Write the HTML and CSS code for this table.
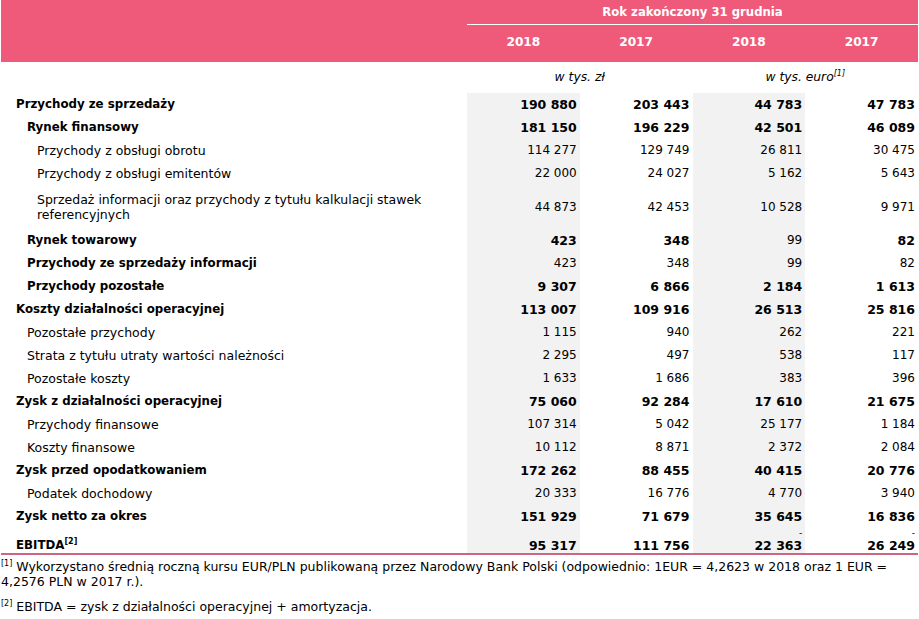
FILE: index.html
```html
<!DOCTYPE html>
<html lang="pl">
<head>
<meta charset="utf-8">
<title>Rachunek zysków i strat</title>
<link rel="stylesheet" href="styles.css">
</head>
<body>
<table class="fin">
  <colgroup>
    <col class="c-label">
    <col class="c-num">
    <col class="c-num">
    <col class="c-num">
    <col class="c-num">
  </colgroup>
  <thead>
    <tr class="h1">
      <th></th>
      <th colspan="4" class="period">Rok zakończony 31 grudnia</th>
    </tr>
    <tr class="h2">
      <th></th>
      <th>2018</th>
      <th>2017</th>
      <th>2018</th>
      <th>2017</th>
    </tr>
  </thead>
  <tbody>
    <tr class="units">
      <td></td>
      <td colspan="2">w tys. zł</td>
      <td colspan="2">w tys. euro<sup>[1]</sup></td>
    </tr>
    <tr class="b l0"><td>Przychody ze sprzedaży</td><td>190 880</td><td>203 443</td><td>44 783</td><td>47 783</td></tr>
    <tr class="b l1"><td>Rynek finansowy</td><td>181 150</td><td>196 229</td><td>42 501</td><td>46 089</td></tr>
    <tr class="l2"><td>Przychody z obsługi obrotu</td><td>114 277</td><td>129 749</td><td>26 811</td><td>30 475</td></tr>
    <tr class="l2"><td>Przychody z obsługi emitentów</td><td>22 000</td><td>24 027</td><td>5 162</td><td>5 643</td></tr>
    <tr class="l2 tall"><td>Sprzedaż informacji oraz przychody z tytułu kalkulacji stawek referencyjnych</td><td>44 873</td><td>42 453</td><td>10 528</td><td>9 971</td></tr>
    <tr class="b l1"><td>Rynek towarowy</td><td>423</td><td>348</td><td class="n">99</td><td>82</td></tr>
    <tr class="b l1"><td>Przychody ze sprzedaży informacji</td><td class="n">423</td><td class="n">348</td><td class="n">99</td><td class="n">82</td></tr>
    <tr class="b l1"><td>Przychody pozostałe</td><td>9 307</td><td>6 866</td><td>2 184</td><td>1 613</td></tr>
    <tr class="b l0"><td>Koszty działalności operacyjnej</td><td>113 007</td><td>109 916</td><td>26 513</td><td>25 816</td></tr>
    <tr class="l1"><td>Pozostałe przychody</td><td>1 115</td><td>940</td><td>262</td><td>221</td></tr>
    <tr class="l1"><td>Strata z tytułu utraty wartości należności</td><td>2 295</td><td>497</td><td>538</td><td>117</td></tr>
    <tr class="l1"><td>Pozostałe koszty</td><td>1 633</td><td>1 686</td><td>383</td><td>396</td></tr>
    <tr class="b l0"><td>Zysk z działalności operacyjnej</td><td>75 060</td><td>92 284</td><td>17 610</td><td>21 675</td></tr>
    <tr class="l1"><td>Przychody finansowe</td><td>107 314</td><td>5 042</td><td>25 177</td><td>1 184</td></tr>
    <tr class="l1"><td>Koszty finansowe</td><td>10 112</td><td>8 871</td><td>2 372</td><td>2 084</td></tr>
    <tr class="b l0"><td>Zysk przed opodatkowaniem</td><td>172 262</td><td>88 455</td><td>40 415</td><td>20 776</td></tr>
    <tr class="l1"><td>Podatek dochodowy</td><td>20 333</td><td>16 776</td><td>4 770</td><td>3 940</td></tr>
    <tr class="b l0"><td>Zysk netto za okres</td><td>151 929</td><td>71 679</td><td>35 645</td><td>16 836</td></tr>
    <tr class="b l0 last"><td>EBITDA<sup>[2]</sup></td><td>95 317</td><td>111 756</td><td><span class="dash">-</span>22 363</td><td><span class="dash">-</span>26 249</td></tr>
  </tbody>
</table>
<div class="notes">
  <p><sup>[1]</sup> Wykorzystano średnią roczną kursu EUR/PLN publikowaną przez Narodowy Bank Polski (odpowiednio: 1EUR = 4,2623 w 2018 oraz 1 EUR = 4,2576 PLN w 2017 r.).</p>
  <p><sup>[2]</sup> EBITDA = zysk z działalności operacyjnej + amortyzacja.</p>
</div>
</body>
</html>
```
FILE: styles.css
```css
html, body {
  margin: 0;
  padding: 0;
  background: #fff;
}
body {
  font-family: "DejaVu Sans", Verdana, sans-serif;
  font-size: 12.5px;
  color: #000;
}
.fin {
  border-collapse: collapse;
  table-layout: fixed;
  width: 917px;
  margin-left: 1px;
}
.c-label { width: 466px; }
.c-num { width: 112.75px; }

/* header band */
.fin thead tr { background: #ef5a7a; color: #fff; }
.fin th {
  font-weight: bold;
  text-align: center;
  padding: 0;
  line-height: 15px;
}
.fin .h1 th { height: 24px; font-size: 11.7px; }
.fin .h1 .period { border-bottom: 1px solid #fff; }
.fin .h2 th { height: 35px; padding-bottom: 2px; font-size: 12.2px; }

/* units row */
.fin tbody tr.units td {
  font-style: italic;
  text-align: center;
  font-size: 12.3px;
  padding: 8px 0 8px 0;
  background: none;
}

sup {
  font-size: 8px;
  line-height: 0;
  vertical-align: super;
}

/* body cells */
.fin tbody td {
  line-height: 15px;
  padding: 4px 3px 4px 0;
  text-align: right;
  vertical-align: middle;
  font-size: 12px;
}
.fin tbody tr.b td { font-size: 12.5px; font-weight: bold; }
.fin tbody tr.b td.n { font-size: 12px; font-weight: normal; }

.fin tbody td:first-child {
  text-align: left;
  padding-right: 20px;
  font-size: 12.5px;
}
.fin tbody tr.b td:first-child { font-size: 11.8px; }

.fin tbody tr:not(.units) td:nth-child(2),
.fin tbody tr:not(.units) td:nth-child(4) {
  background: #f2f2f2;
}

.l0 td:first-child { padding-left: 15px; }
.l1 td:first-child { padding-left: 26px; }
.l2 td:first-child { padding-left: 36px; }

.fin tbody tr.tall td { padding-top: 7px; padding-bottom: 7px; }

.fin tbody tr.last td {
  border-bottom: 2px solid #cf6681;
  padding-top: 2px;
  padding-bottom: 0;
  vertical-align: bottom;
}
.dash {
  display: block;
  font-weight: normal;
  line-height: 6px;
  height: 8px;
  font-size: 9px;
}

.notes { margin-left: 1px; padding-top: 4px; }
.notes p {
  margin: 0 0 10px 0;
  line-height: 15px;
}
```
